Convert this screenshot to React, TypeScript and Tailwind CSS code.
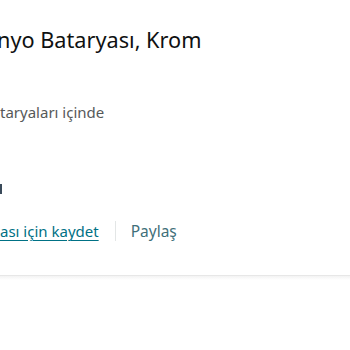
import React from "react";

export default function App() {
  return (
    <div
      className="w-[350px] h-[350px] bg-white overflow-hidden"
      style={{ fontFamily: '"Noto Sans", "Open Sans", Arial, sans-serif' }}
    >
      <div className="-ml-[3px]">
        <div className="pt-[24px] text-[21.7px] leading-[32px] text-[#0F1111] whitespace-nowrap">
          nyo Bataryası, Krom
        </div>
        <div className="mt-[46px] ml-[3px] text-[15px] leading-[20px] text-[#565959] whitespace-nowrap">
          taryaları içinde
        </div>
        <div className="mt-[56px] h-[20px] w-[5px] overflow-hidden">
          <div className="w-[2px] h-[10px] bg-[#3a4a5a] mt-[6px] ml-[3px]" />
        </div>
        <div className="mt-[22px] flex items-center ml-[3px] text-[15px] leading-[22px] whitespace-nowrap">
          <span className="text-[#007185] underline underline-offset-[3px]">ası için kaydet</span>
          <span className="mx-[16px] h-[20px] w-px bg-[#e3e6e6]" />
          <span className="text-[15.5px] text-[#3f6f7a] -ml-[1px]">Paylaş</span>
        </div>
      </div>
      <div className="mt-[33px] h-px bg-[#e7e7e7]" />
      <div className="h-[4px] bg-gradient-to-b from-[#f3f3f3] to-white" />
    </div>
  );
}
